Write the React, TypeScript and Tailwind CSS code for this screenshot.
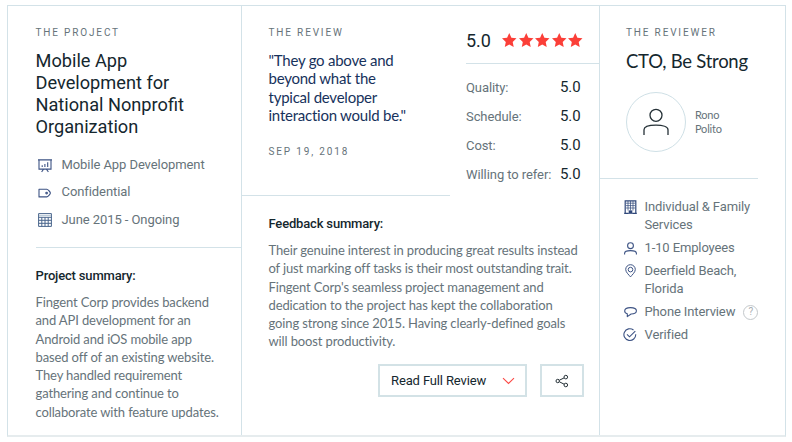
import React from "react";

const ROBOTO = "font-['Roboto','Liberation_Sans',sans-serif]";
const LATO = "font-['Lato','Liberation_Sans',sans-serif]";

function Lines({ rows }: { rows: string[] }) {
  return (
    <>
      {rows.map((row) => (
        <span key={row} className="block whitespace-nowrap">{row}</span>
      ))}
    </>
  );
}

function Eyebrow({ children }: { children: React.ReactNode }) {
  return (
    <div className="h-[14px] whitespace-nowrap text-[10px] leading-[14px] tracking-[1.84px] text-[#66737a]">{children}</div>
  );
}

function BoardIcon() {
  return (
    <svg width="14" height="14" viewBox="0 0 14 14" fill="none" stroke="#3d5384" strokeWidth="1.1">
      <path d="M0 .9h14M1 .9v9.200h12V.9M4.200 8V6.300M6.900 8V5M9.700 8V3.200M5.800 10l-2.200 2.800M8.200 10l2.200 2.800" />
    </svg>
  );
}

function TagIcon() {
  return (
    <svg width="14" height="14" viewBox="0 0 14 14" fill="none" stroke="#3d5384" strokeWidth="1.1">
      <path d="M1 3.300h7.800c1 0 3.600 2.600 3.600 3.800s-2.600 3.800-3.600 3.800H1z" strokeLinejoin="round" />
      <circle cx="8.600" cy="7.100" r=".8" />
    </svg>
  );
}

function CalendarIcon() {
  return (
    <svg width="14" height="14" viewBox="0 0 14 14" fill="none" stroke="#49658c" strokeWidth="1">
      <path d="M.6.6h12.800v12.800H.6zM.6 4.300h12.800M.6 7.300h12.800M.6 10.300h12.800M3.800 4.300v9.100M7 4.300v9.100M10.200 4.300v9.100" />
      <path d="M1 2.400h12" stroke="#b5c6d4" />
    </svg>
  );
}

function BuildingIcon() {
  return (
    <svg width="13" height="14" viewBox="0 0 13 14" fill="none" stroke="#2f477a">
      <path d="M1.200 13.300V.8h10.600v12.500" strokeWidth="1.200" />
      <path d="M.2 13.300h4.600M8.200 13.300h4.600" strokeWidth="1.200" />
      <path d="M4 1v9.500M6.500 1v9.500M9 1v9.500M2 3.200h9M2 5.600h9M2 8h9" strokeWidth=".7" />
      <path d="M4.700 13.800v-3.400h3.600v3.400z" fill="#2f477a" stroke="none" />
    </svg>
  );
}

function PersonIcon() {
  return (
    <svg width="13" height="13" viewBox="0 0 13 13" fill="none" stroke="#3d5384" strokeWidth="1.100">
      <circle cx="6.500" cy="3.700" r="2.900" />
      <path d="M.6 12.600v-1.400c0-1.700 2.600-2.600 5.900-2.600s5.900.9 5.900 2.600v1.400" />
    </svg>
  );
}

function PinIcon() {
  return (
    <svg width="13" height="14" viewBox="0 0 13 14" fill="none" stroke="#3d5384" strokeWidth="1">
      <path d="M6.500 12.900C5.300 11.200 1.700 8.400 1.700 5.500a4.800 4.800 0 0 1 9.600 0c0 2.900-3.600 5.700-4.800 7.400z" />
      <circle cx="6.500" cy="5.600" r="2.300" />
    </svg>
  );
}

function BubbleIcon() {
  return (
    <svg width="13" height="12" viewBox="0 0 13 12" fill="none" stroke="#3d5384" strokeWidth="1.100" strokeLinejoin="round">
      <path d="M3.300 7.800C1.700 7.300.7 6.200.7 4.900.7 2.800 3.100 1.600 6.500 1.600s5.900 1.200 5.900 3.200-2.200 3.200-5.300 3.200L3.300 10.600z" />
    </svg>
  );
}

function VerifiedIcon() {
  return (
    <svg width="14" height="14" viewBox="0 0 14 14" fill="none" stroke="#3d5384" strokeWidth="1.100">
      <path d="M10.500 2A5.900 5.900 0 1 0 12.700 6.200M4 6.400l2.500 2.400 5.800-5.700" />
    </svg>
  );
}

function Star() {
  return (
    <svg width="16.500" height="16" viewBox="0 0 16.500 16" fill="#fb3f38">
      <path d="M8.250 1l2.150 4.750 5.100.6-3.800 3.550 1 5.100-4.450-2.500L3.800 15l1-5.100L1 6.350l5.100-.6z" />
    </svg>
  );
}

const scores = [
  ["Quality:", "5.0"],
  ["Schedule:", "5.0"],
  ["Cost:", "5.0"],
  ["Willing to refer:", "5.0"],
];

const projectMeta = [
  { icon: <BoardIcon />, text: "Mobile App Development" },
  { icon: <TagIcon />, text: "Confidential" },
  { icon: <CalendarIcon />, text: "June 2015 - Ongoing" },
];

const reviewerMeta = [
  { icon: <BuildingIcon />, rows: ["Individual & Family", "Services"] },
  { icon: <PersonIcon />, rows: ["1-10 Employees"] },
  { icon: <PinIcon />, rows: ["Deerfield Beach,", "Florida"] },
  { icon: <BubbleIcon />, rows: ["Phone Interview"], help: true },
  { icon: <VerifiedIcon />, rows: ["Verified"] },
];

function ProjectColumn() {
  return (
    <section className="flex w-[234px] shrink-0 flex-col border-r border-[#d3e2e8] pl-[27.500px] pt-[20px]">
      <Eyebrow>THE PROJECT</Eyebrow>
      <h2 className="mt-[10px] text-[18.200px] leading-[22px] text-[#15272e]">
        <Lines rows={["Mobile App", "Development for", "National Nonprofit", "Organization"]} />
      </h2>
      <ul className="mt-[13px] border-b border-[#d3e2e8] pb-[14px]">
        {projectMeta.map((m) => (
          <li key={m.text} className="flex h-[27.400px] items-center gap-[10px] pl-[2px] text-[13px] tracking-[-0.08px] text-[#66737a]">
            <span className="flex w-[14px] justify-center pt-[2px]">{m.icon}</span>
            <span className="whitespace-nowrap">{m.text}</span>
          </li>
        ))}
      </ul>
      <h3 className="mt-[19px] text-[13px] font-medium leading-[18px] tracking-[-0.17px] text-[#15272e]">Project summary:</h3>
      <p className={`${LATO} mt-[8px] text-[13px] leading-[18.250px] tracking-[-0.130px] text-[#66737a]`}>
        <Lines
          rows={[
            "Fingent Corp provides backend",
            "and API development for an",
            "Android and iOS mobile app",
            "based off of an existing website.",
            "They handled requirement",
            "gathering and continue to",
            "collaborate with feature updates.",
          ]}
        />
      </p>
    </section>
  );
}

function ReviewColumn() {
  return (
    <section className="flex w-[358px] shrink-0 flex-col border-r border-[#d3e2e8]">
      <div className="flex h-[190px]">
        <div className="w-[208px] shrink-0 border-b border-[#d3e2e8] pl-[26.500px] pt-[20px]">
          <Eyebrow>THE REVIEW</Eyebrow>
          <blockquote className={`${LATO} mt-[11px] text-[15px] leading-[18.250px] tracking-[-0.240px] text-[#17325c]`}>
            <Lines rows={['"They go above and', "beyond what the", "typical developer", 'interaction would be."']} />
          </blockquote>
          <div className="mt-[21px]">
            <Eyebrow>SEP 19, 2018</Eyebrow>
          </div>
        </div>
        <div className="ml-[16px] flex-1">
          <div className="flex h-[58px] items-center border-b border-[#d3e2e8] pt-[11px]">
            <span className="w-[35px] text-[18px] text-[#15272e]">5.0</span>
            <div className="flex">
              {[1, 2, 3, 4, 5].map((n) => (
                <Star key={n} />
              ))}
            </div>
          </div>
          <dl className="pr-[18.500px] pt-[9px]">
            {scores.map(([label, value]) => (
              <div key={label} className="flex h-[29px] items-center justify-between whitespace-nowrap">
                <dt className="text-[13px] tracking-[-0.080px] text-[#66737a]">{label}</dt>
                <dd className="text-[15px] tracking-[-0.100px] text-[#15272e]">{value}</dd>
              </div>
            ))}
          </dl>
        </div>
      </div>
      <div className="pl-[26.500px] pt-[19px]">
        <h3 className="text-[13px] font-medium leading-[18px] tracking-[-0.170px] text-[#15272e]">Feedback summary:</h3>
        <p className={`${LATO} mt-[8px] text-[13px] leading-[18.250px] tracking-[-0.130px] text-[#66737a]`}>
          <Lines
            rows={[
              "Their genuine interest in producing great results instead",
              "of just marking off tasks is their most outstanding trait.",
              "Fingent Corp's seamless project management and",
              "dedication to the project has kept the collaboration",
              "going strong since 2015. Having clearly-defined goals",
              "will boost productivity.",
            ]}
          />
        </p>
      </div>
      <div className="mt-[13.500px] flex gap-[13px] pl-[136px]">
        <button className="flex h-[33px] w-[149px] items-center justify-between border-2 border-[#d3e2e6] pl-[11px] pr-[10px] pt-px text-[13px] tracking-[-0.130px] text-[#15272e]">
          <span className="whitespace-nowrap">Read Full Review</span>
          <svg width="13" height="8" viewBox="0 0 13 8" fill="none" stroke="#fb4a46" strokeWidth="1.100">
            <path d="M1 1.200l5.500 5.300L12 1.200" />
          </svg>
        </button>
        <button aria-label="Share" className="flex h-[33px] w-[44px] items-center justify-center border-2 border-[#d3e2e6]">
          <svg width="14" height="14" viewBox="0 0 14 14" fill="none" stroke="#253137" strokeWidth="1">
            <circle cx="2.700" cy="7" r="1.700" />
            <circle cx="10.800" cy="3.100" r="1.800" />
            <circle cx="10.800" cy="11" r="1.800" />
            <path d="M4.400 6.200l4.700-2.300M4.400 7.800l4.700 2.400" />
          </svg>
        </button>
      </div>
    </section>
  );
}

function ReviewerColumn() {
  return (
    <section className="flex flex-1 flex-col">
      <div className="mr-[27px] h-[173px] border-b border-[#d3e2e8] pl-[26px] pt-[20px]">
        <Eyebrow>THE REVIEWER</Eyebrow>
        <h2 className={`${LATO} mt-[9px] whitespace-nowrap text-[18.500px] leading-[24px] tracking-[-0.250px] text-[#15272e]`}>CTO, Be Strong</h2>
        <div className="mt-[19px] flex items-center gap-[9px]">
          <div className="flex size-[60px] shrink-0 items-center justify-center rounded-full border border-[#cfe0e6]">
            <svg width="28" height="28" viewBox="0 0 28 28" fill="none" stroke="#253137" strokeWidth="1.300">
              <circle cx="14" cy="7.300" r="6" />
              <path d="M2 27v-5.300c0-3 5.300-4.500 12-4.500s12 1.500 12 4.500V27" />
            </svg>
          </div>
          <div className={`${LATO} text-[11px] leading-[13.700px] tracking-[-0.200px] text-[#66737a]`}>
            <Lines rows={["Rono", "Polito"]} />
          </div>
        </div>
      </div>
      <ul className="flex flex-col gap-[4.600px] pl-[23px] pt-[19px] text-[13px] leading-[18.250px] tracking-[-0.120px] text-[#66737a]">
        {reviewerMeta.map((m) => (
          <li key={m.rows[0]} className="flex">
            <span className="flex h-[18.250px] w-[14px] shrink-0 items-center justify-center">{m.icon}</span>
            <div className="ml-[7.500px]">
              <Lines rows={m.rows} />
            </div>
            {m.help && (
              <span className="-mb-px ml-[8px] mt-[1.500px] flex size-[15px] items-center justify-center rounded-full border border-[#c3c8cb] text-[10px] leading-none text-[#a8aeb2]">
                ?
              </span>
            )}
          </li>
        ))}
      </ul>
    </section>
  );
}

export default function App() {
  return (
    <main className={`${ROBOTO} h-[442px] w-[792px] overflow-hidden bg-white pl-[7px] pt-[5px]`}>
      <article className="flex h-[432px] w-[779px] border border-b-2 border-[#d3e2e8] border-b-[#e6ecee]">
        <ProjectColumn />
        <ReviewColumn />
        <ReviewerColumn />
      </article>
    </main>
  );
}
